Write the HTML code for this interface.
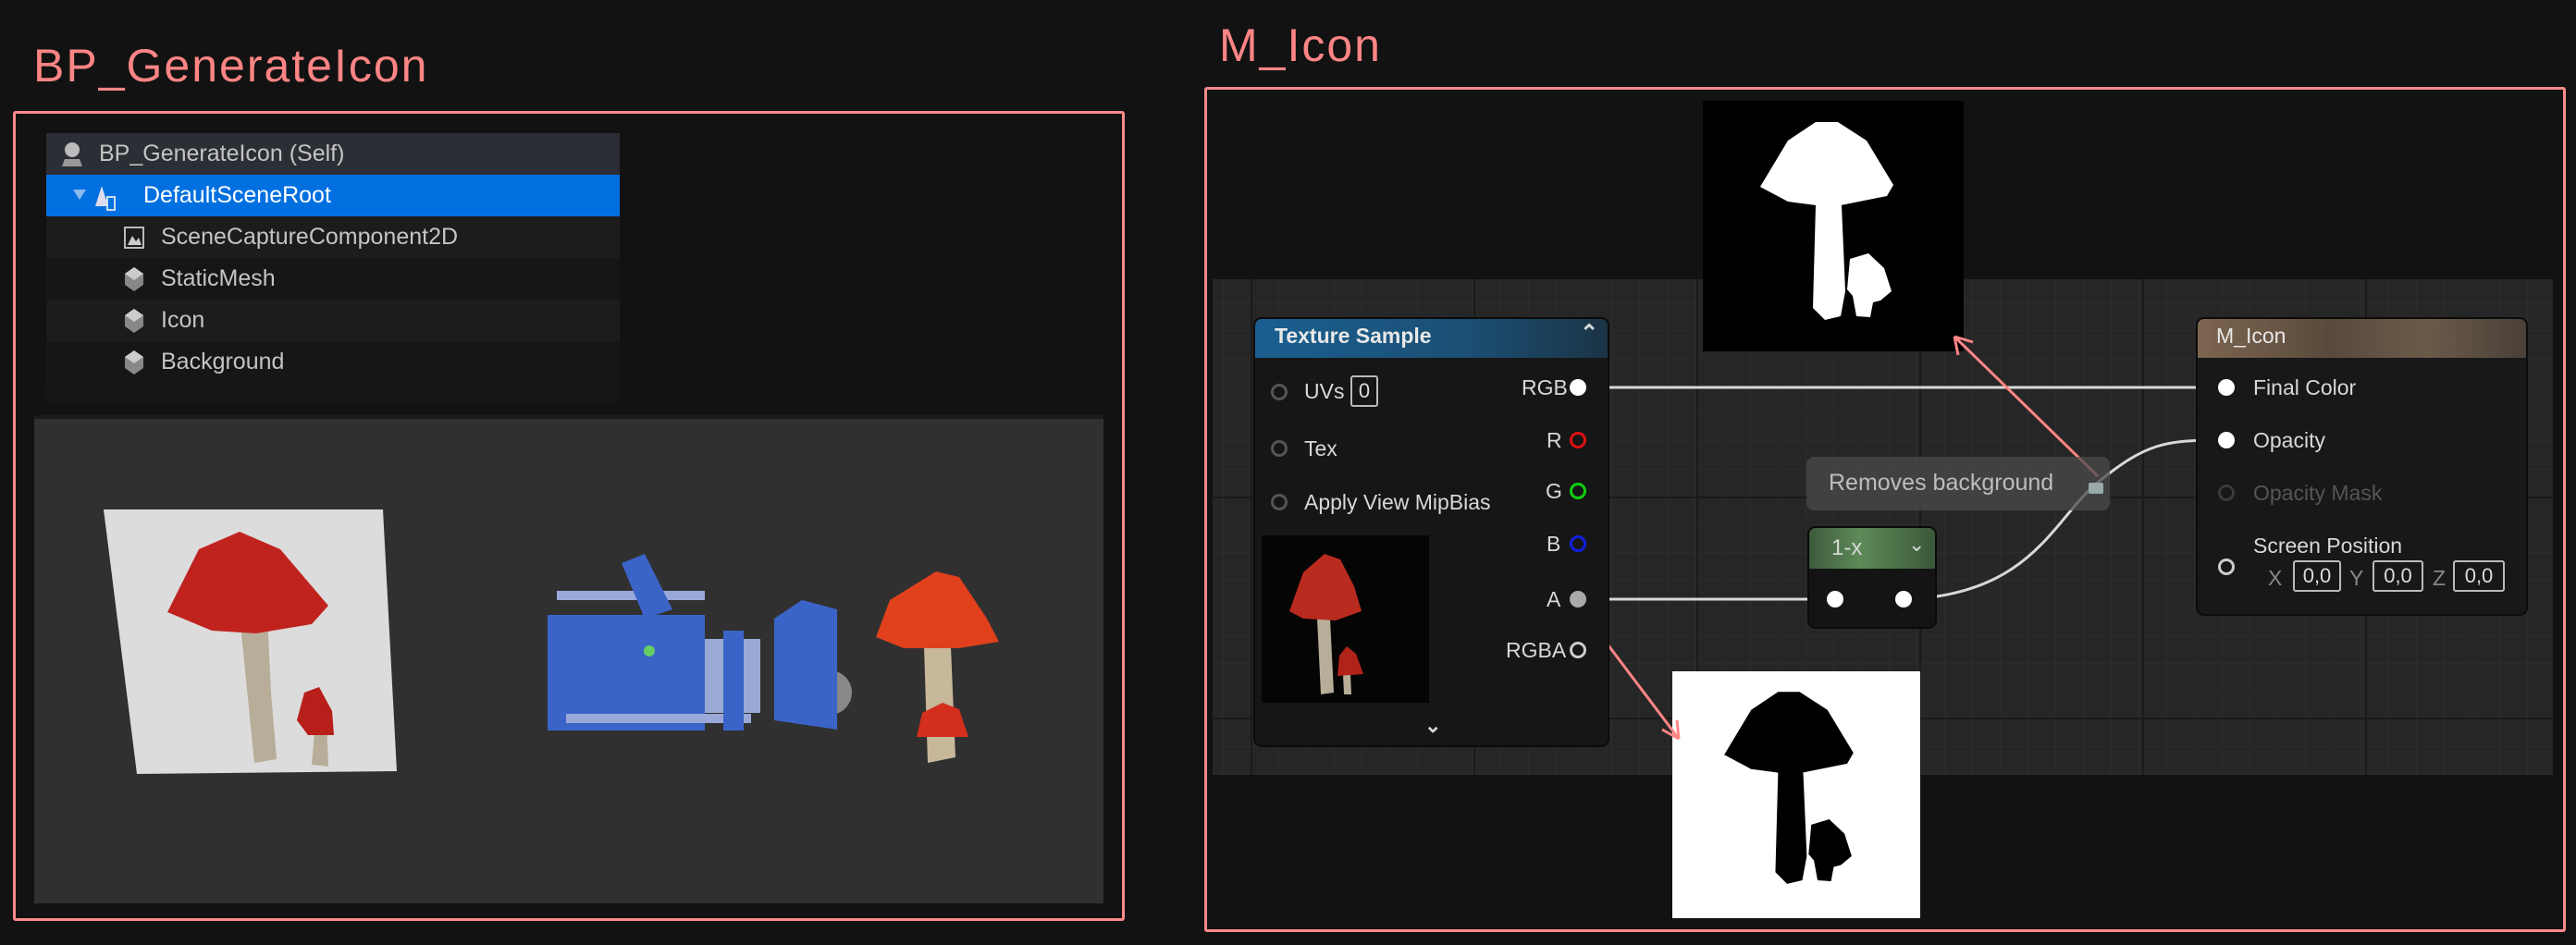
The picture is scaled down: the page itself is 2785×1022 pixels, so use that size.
<!DOCTYPE html>
<html><head><meta charset="utf-8"><style>
*{margin:0;padding:0;box-sizing:border-box}
body{width:2785px;height:1022px;background:#121212;position:relative;overflow:hidden;font-family:"Liberation Sans",sans-serif}
.a{position:absolute}
.title{color:#ff8585;font-size:50px;font-family:"Liberation Sans Narrow","Liberation Sans",sans-serif;letter-spacing:2px}
.box{border:3px solid #ff8a8a;border-radius:3px}
.row{position:absolute;left:0;width:620px;height:45px;color:#c4c4c4;font-size:25px;line-height:45px}
.nt{color:#d8d8d8;font-size:23px;position:absolute;white-space:nowrap}
.pin{position:absolute;width:18px;height:18px;border-radius:50%;}
.opin{border:3px solid #555;background:transparent}
.vbox{position:absolute;border:2px solid #bbb;border-radius:3px;color:#ddd;font-size:22px;text-align:center;line-height:30px;height:34px}
</style></head><body>

<div class="a title" style="left:36px;top:42px">BP_GenerateIcon</div>
<div class="a title" style="left:1318px;top:20px">M_Icon</div>

<div class="a box" style="left:14px;top:120px;width:1202px;height:876px"></div>
<div class="a box" style="left:1302px;top:94px;width:1472px;height:914px"></div>

<!-- outliner -->
<div class="a" style="left:50px;top:144px;width:620px;height:291px;background:#151515">
  <div class="row" style="top:0;background:#2b2e34"><svg class="a" style="left:14px;top:8px" width="28" height="30"><circle cx="14" cy="10" r="8" fill="#bbb"/><path d="M3 28h22l-3-8H6z" fill="#999"/></svg><span style="position:absolute;left:57px">BP_GenerateIcon (Self)</span></div>
  <div class="row" style="top:45px;background:#0070e0;color:#fff"><svg class="a" style="left:26px;top:10px" width="60" height="30"><path d="M3 6h14l-7 11z" fill="#8ab8ec"/><path d="M34 2l-7 22h14z" fill="#dde"/><rect x="40" y="14" width="8" height="14" fill="none" stroke="#cde" stroke-width="2"/></svg><span style="position:absolute;left:105px">DefaultSceneRoot</span></div>
  <div class="row" style="top:90px;background:#1c1c1c"><svg class="a" style="left:83px;top:10px" width="24" height="26"><rect x="2" y="2" width="20" height="22" fill="none" stroke="#bbb" stroke-width="2"/><path d="M5 21l5-10 4 6 3-4 3 8z" fill="#ccc"/></svg><span style="position:absolute;left:124px">SceneCaptureComponent2D</span></div>
  <div class="row" style="top:135px;background:#161616"><svg class="a" style="left:83px;top:8px" width="24" height="30"><path d="M12 2l10 7v12l-10 7-10-7V9z" fill="#888"/><path d="M12 2l10 7-10 7-10-7z" fill="#ccc"/></svg><span style="position:absolute;left:124px">StaticMesh</span></div>
  <div class="row" style="top:180px;background:#1c1c1c"><svg class="a" style="left:83px;top:8px" width="24" height="30"><path d="M12 2l10 7v12l-10 7-10-7V9z" fill="#888"/><path d="M12 2l10 7-10 7-10-7z" fill="#ccc"/></svg><span style="position:absolute;left:124px">Icon</span></div>
  <div class="row" style="top:225px;background:#161616"><svg class="a" style="left:83px;top:8px" width="24" height="30"><path d="M12 2l10 7v12l-10 7-10-7V9z" fill="#888"/><path d="M12 2l10 7-10 7-10-7z" fill="#ccc"/></svg><span style="position:absolute;left:124px">Background</span></div>
</div>

<!-- viewport -->
<svg class="a" style="left:37px;top:449px" width="1156" height="528">
  <rect width="1156" height="528" fill="#303030"/>
  <rect width="1156" height="4" fill="#1a1a1a"/>
  <path d="M75 102L377 102L392 385L111 388Z" fill="#dcdcdc"/>
  <path d="M222 216L252 216L256 300L262 372L238 376Z" fill="#b8ad98"/>
  <path d="M222 126L266 145L318 206L300 226L240 236L192 233L144 213L178 145Z" fill="#c0231e"/>
  <path d="M304 330L316 330L318 380L300 378Z" fill="#b8ad98"/>
  <path d="M292 300L308 294L322 320L324 346L296 346L284 330Z" fill="#b81f1a"/>
  <path d="M555 216L725 216L725 341L555 341Z" fill="#3b64c8"/>
  <rect x="565" y="190" width="160" height="10" fill="#9aa8d8"/>
  <rect x="575" y="323" width="200" height="10" fill="#9aa8d8"/>
  <path d="M635 160L660 150L690 210L660 220Z" fill="#3b64c8"/>
  <rect x="725" y="242" width="60" height="80" fill="#9aaad4"/>
  <rect x="745" y="233" width="22" height="108" fill="#3b64c8"/>
  <circle cx="860" cy="300" r="24" fill="#888"/>
  <path d="M800 220L830 200L868 210L868 340L800 330Z" fill="#3b64c8"/>
  <circle cx="665" cy="255" r="6" fill="#6c6"/>
  <path d="M962 250L991 250L996 370L966 376Z" fill="#c8b89a"/>
  <path d="M975 169L1000 175L1030 220L1043 245L1000 252L940 252L910 240L925 200Z" fill="#e0401c"/>
  <path d="M982 311L1000 318L1010 348L954 348L960 322Z" fill="#d42e1c"/>
</svg>

<!-- graph -->
<div class="a" style="left:1311px;top:302px;width:1449px;height:536px;background-color:#262626;background-image:linear-gradient(90deg,#1a1a1a 2px,transparent 2px),linear-gradient(#1a1a1a 2px,transparent 2px),linear-gradient(90deg,#2c2c2c 1px,transparent 1px),linear-gradient(#2c2c2c 1px,transparent 1px);background-size:241px 239px,241px 239px,30px 30px,30px 30px;background-position:41px 235px,41px 235px,11px 25px,11px 25px"></div>

<!-- images -->
<svg class="a" style="left:1841px;top:109px" width="282" height="271"><rect width="282" height="271" fill="#000"/>
<path d="M122 23L146 23L177 43L206 91L199 103L149 113L122 113L92 109L62 93L92 43Z M122 113L119 224L132 237L149 233L154 206L150 113Z M159 171L179 165L196 181L204 206L192 216L184 218L181 234L166 233L162 211L156 204Z" fill="#fff"/></svg>
<svg class="a" style="left:1808px;top:726px" width="268" height="267"><rect width="268" height="267" fill="#fff"/>
<g transform="translate(-4,0) scale(0.97)"><path d="M122 23L146 23L177 43L206 91L199 103L149 113L122 113L92 109L62 93L92 43Z M122 113L119 224L132 237L149 233L154 206L150 113Z M159 171L179 165L196 181L204 206L192 216L184 218L181 234L166 233L162 211L156 204Z" fill="#000"/></g></svg>

<!-- wires & arrows -->
<svg class="a" style="left:0;top:0" width="2785" height="1022">
  <path d="M1716 419H2400" stroke="#d8d8d8" stroke-width="3" fill="none"/>
  <path d="M1716 648H1978" stroke="#d8d8d8" stroke-width="3" fill="none"/>
  <path d="M2066 648C2200 640 2220 560 2270 520S2340 476 2400 476" stroke="#d8d8d8" stroke-width="3" fill="none"/>
  <path d="M2268 515L2113 364M2113 364l4 20M2113 364l20 6" stroke="#ff8585" stroke-width="3" fill="none"/>
  <path d="M1708 657L1815 799M1815 799l-2-20M1815 799l-18-10" stroke="#ff8585" stroke-width="3" fill="none"/>
</svg>

<!-- comment -->
<div class="a" style="left:1953px;top:494px;width:328px;height:58px;background:rgba(75,75,75,.75);border-radius:8px"></div>
<div class="nt" style="left:1977px;top:508px;color:#bdbdbd;font-size:25px">Removes background</div>
<div class="a" style="left:2258px;top:522px;width:16px;height:12px;background:#9aa;border-radius:2px"></div>

<!-- 1-x node -->
<div class="a" style="left:1954px;top:569px;width:140px;height:111px;background:#141414;border-radius:9px;border:2px solid #0a0a0a;overflow:hidden">
 <div style="height:44px;background:linear-gradient(90deg,#3d5a3b,#5e8a58 40%,#3a5838)"></div></div>
<div class="nt" style="left:1980px;top:579px;font-size:24px">1-x</div>
<div class="nt" style="left:2063px;top:576px;font-size:22px">&#8964;</div>
<div class="pin" style="left:1975px;top:639px;background:#fff"></div>
<div class="pin" style="left:2049px;top:639px;background:#fff"></div>

<!-- Texture Sample node -->
<div class="a" style="left:1355px;top:343px;width:385px;height:465px;background:#161616;border-radius:9px;border:2px solid #0b0b0b;overflow:hidden">
 <div style="height:42px;background:linear-gradient(90deg,#1a5f90,#1b4f74 60%,#1b3446)"></div></div>
<div class="nt" style="left:1378px;top:350px;color:#e8e8e8;font-weight:bold;font-size:23px">Texture Sample</div>
<div class="nt" style="left:1708px;top:346px;font-size:24px;font-weight:bold">&#8963;</div>
<div class="pin opin" style="left:1374px;top:415px"></div><div class="nt" style="left:1410px;top:410px">UVs</div>
<div class="vbox" style="left:1460px;top:406px;width:30px">0</div>
<div class="pin opin" style="left:1374px;top:476px"></div><div class="nt" style="left:1410px;top:472px">Tex</div>
<div class="pin opin" style="left:1374px;top:534px"></div><div class="nt" style="left:1410px;top:530px">Apply View MipBias</div>
<div class="nt" style="left:1645px;top:406px">RGB</div><div class="pin" style="left:1697px;top:410px;background:#fff"></div>
<div class="nt" style="left:1672px;top:463px">R</div><div class="pin" style="left:1697px;top:467px;border:3px solid #e01010"></div>
<div class="nt" style="left:1671px;top:518px">G</div><div class="pin" style="left:1697px;top:522px;border:3px solid #10d010"></div>
<div class="nt" style="left:1672px;top:575px">B</div><div class="pin" style="left:1697px;top:579px;border:3px solid #1020e0"></div>
<div class="nt" style="left:1672px;top:635px">A</div><div class="pin" style="left:1697px;top:639px;background:#aaa"></div>
<div class="nt" style="left:1628px;top:690px">RGBA</div><div class="pin" style="left:1697px;top:694px;border:3px solid #ccc"></div>
<svg class="a" style="left:1364px;top:579px" width="181" height="181"><rect width="181" height="181" fill="#050505"/>
 <path d="M60 90L74 90L78 170L64 172Z" fill="#b8ad98"/>
 <path d="M68 20L85 26L100 55L108 82L80 92L45 90L30 82L45 40Z" fill="#b92a1f"/>
 <path d="M88 150L96 150L97 172L89 172Z" fill="#b8ad98"/>
 <path d="M92 120L102 128L110 150L82 152L84 130Z" fill="#b12318"/></svg>
<div class="nt" style="left:1540px;top:772px;font-size:22px;font-weight:bold">&#8964;</div>

<!-- M_Icon node -->
<div class="a" style="left:2374px;top:343px;width:359px;height:323px;background:#181818;border-radius:9px;border:2px solid #0b0b0b;overflow:hidden">
 <div style="height:42px;background:linear-gradient(90deg,#7d6650,#5a4a3c 40%,#6b5a4a 70%,#4a4038)"></div></div>
<div class="nt" style="left:2396px;top:350px;color:#e8e8e8;font-size:23px">M_Icon</div>
<div class="pin" style="left:2398px;top:410px;background:#fff"></div><div class="nt" style="left:2436px;top:406px">Final Color</div>
<div class="pin" style="left:2398px;top:467px;background:#fff"></div><div class="nt" style="left:2436px;top:463px">Opacity</div>
<div class="pin opin" style="left:2398px;top:524px;border-color:#3a3a3a"></div><div class="nt" style="left:2436px;top:520px;color:#555">Opacity Mask</div>
<div class="nt" style="left:2436px;top:577px">Screen Position</div>
<div class="pin" style="left:2398px;top:604px;border:3px solid #ccc"></div>
<div class="nt" style="left:2452px;top:612px;color:#888">X</div><div class="vbox" style="left:2479px;top:606px;width:52px">0,0</div>
<div class="nt" style="left:2540px;top:612px;color:#888">Y</div><div class="vbox" style="left:2565px;top:606px;width:55px">0,0</div>
<div class="nt" style="left:2630px;top:612px;color:#888">Z</div><div class="vbox" style="left:2652px;top:606px;width:56px">0,0</div>

</body></html>
